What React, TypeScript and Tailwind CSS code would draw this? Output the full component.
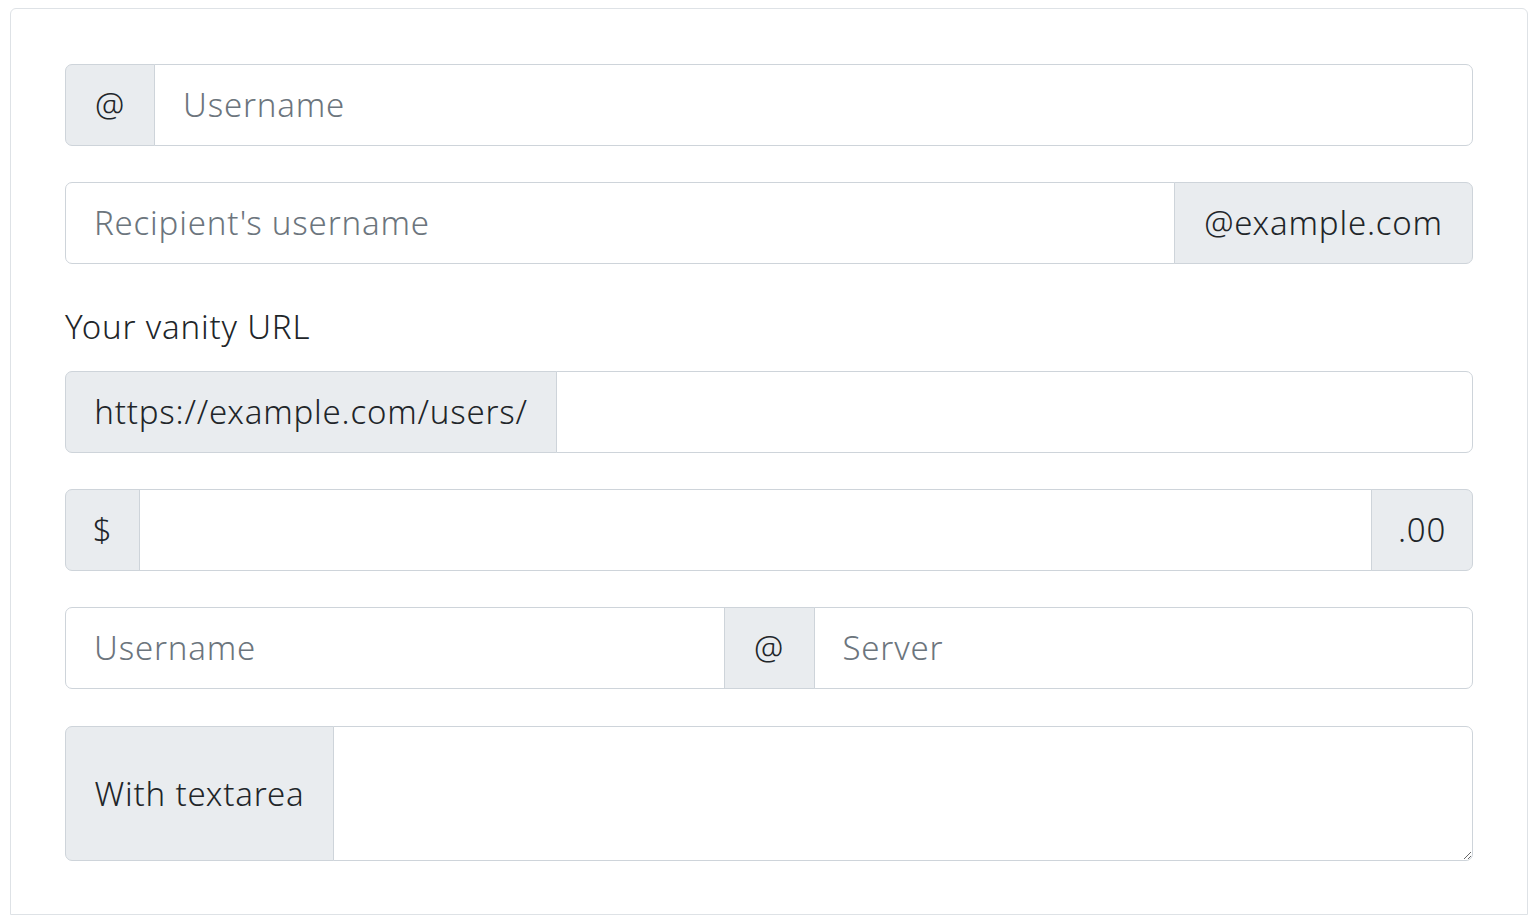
import type { ReactNode } from "react";

const FONT = "font-['Noto_Sans','Open_Sans',sans-serif]";

function Addon({ children, className = "" }: { children: ReactNode; className?: string }) {
  return (
    <span
      className={`flex shrink-0 items-center justify-center border border-[#ced4da] bg-[#e9ecef] px-[28px] text-[#212529] ${className}`}
    >
      {children}
    </span>
  );
}

function Field({ placeholder, className = "" }: { placeholder?: string; className?: string }) {
  return (
    <input
      type="text"
      placeholder={placeholder}
      className={`min-w-0 flex-1 border border-[#ced4da] bg-white px-[28px] font-light tracking-[0.8px] text-[#212529] outline-none placeholder:text-[#6c757d] ${className}`}
    />
  );
}

export default function App() {
  return (
    <div className={`min-h-[919px] bg-white pl-[10px] pr-[6px] pt-[8px] ${FONT} text-[33px] font-light leading-[1.5] tracking-[0.8px]`}>
      <div className="flex h-[907px] flex-col rounded-t-[6px] border border-[#dee2e6] px-[54px] pt-[55px]">
        {/* prefix addon */}
        <div className="flex h-[82px]">
          <Addon className="w-[90px] rounded-l-[7px]">@</Addon>
          <Field placeholder="Username" className="-ml-px rounded-r-[7px]" />
        </div>

        {/* suffix addon */}
        <div className="mt-[36px] flex h-[82px]">
          <Field placeholder="Recipient's username" className="rounded-l-[7px]" />
          <Addon className="-ml-px w-[299px] rounded-r-[7px]">@example.com</Addon>
        </div>

        <label className="mt-[36px] mb-[17px] block h-[54px] leading-[54px] text-[#212529]">Your vanity URL</label>
        <div className="flex h-[82px]">
          <Addon className="w-[492px] rounded-l-[7px]">https://example.com/users/</Addon>
          <Field className="-ml-px rounded-r-[7px]" />
        </div>

        {/* both sides */}
        <div className="mt-[36px] flex h-[82px]">
          <Addon className="w-[75px] rounded-l-[7px]">$</Addon>
          <Field className="-ml-px" />
          <Addon className="-ml-px w-[102px] rounded-r-[7px]">.00</Addon>
        </div>

        {/* middle addon */}
        <div className="mt-[36px] flex h-[82px]">
          <Field placeholder="Username" className="rounded-l-[7px]" />
          <Addon className="-ml-px w-[91px]">@</Addon>
          <Field placeholder="Server" className="-ml-px rounded-r-[7px]" />
        </div>

        {/* textarea */}
        <div className="mt-[37px] flex h-[135px]">
          <Addon className="w-[269px] rounded-l-[7px]">With textarea</Addon>
          <textarea className="-ml-px min-w-0 flex-1 resize-y rounded-r-[7px] border border-[#ced4da] bg-white px-[28px] py-[14px] font-light text-[#212529] outline-none" />
        </div>
      </div>
    </div>
  );
}
